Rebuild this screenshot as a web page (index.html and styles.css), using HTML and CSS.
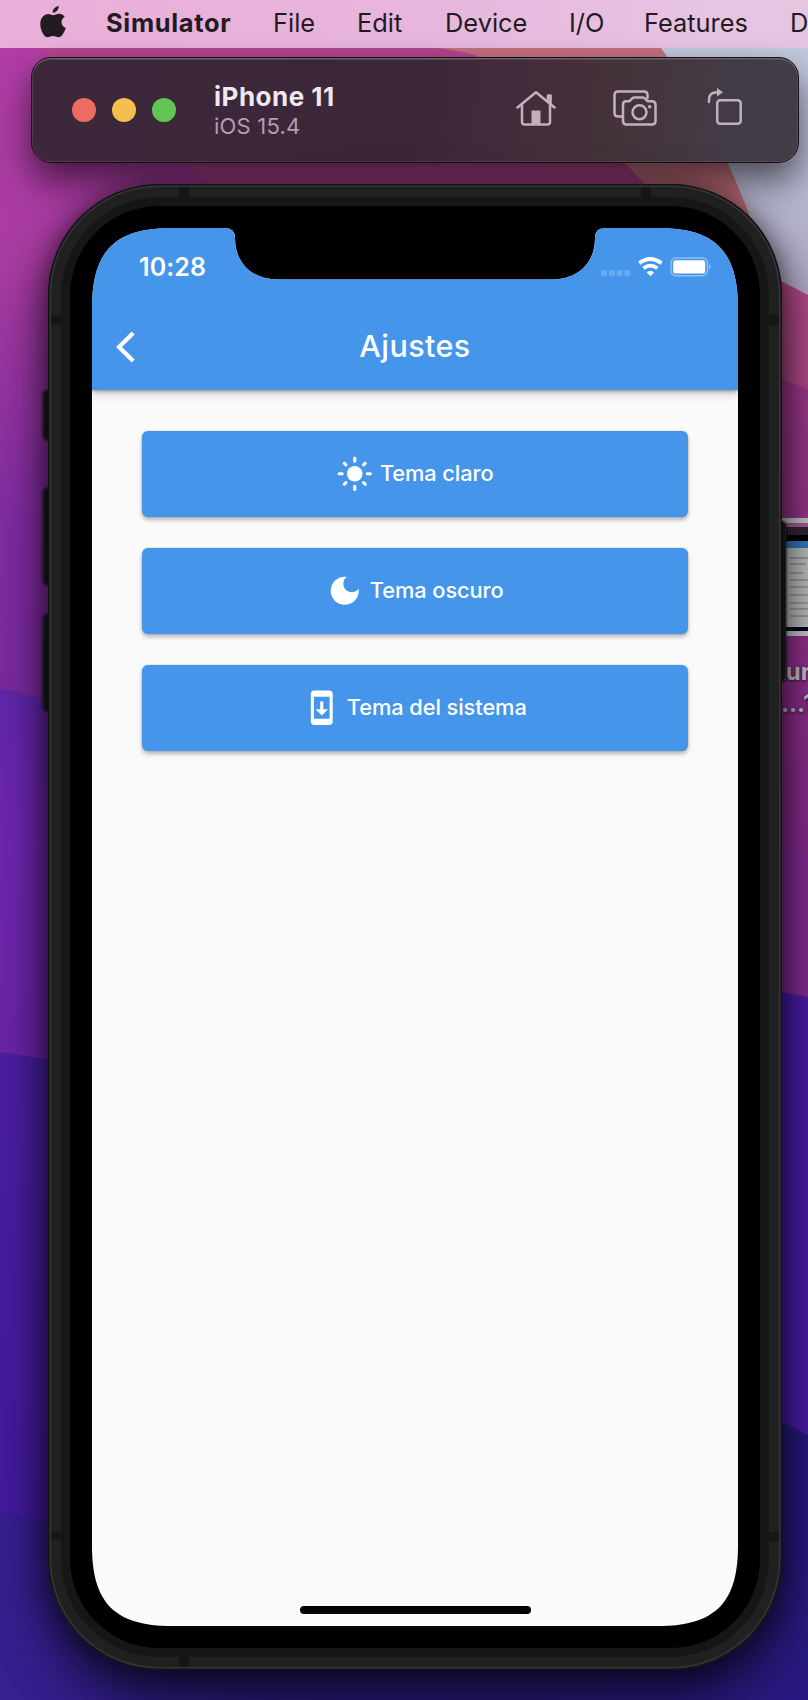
FILE: index.html
```html
<!DOCTYPE html>
<html lang="es">
<head>
<meta charset="utf-8">
<title>Simulator</title>
<link rel="stylesheet" href="styles.css">
</head>
<body>
<div class="desktop">
  <svg class="wallpaper" viewBox="0 0 808 1700" aria-hidden="true">
    <defs>
      <linearGradient id="pink" x1="0" y1="0" x2="0" y2="1">
        <stop offset="0" stop-color="#b33da8"/><stop offset=".35" stop-color="#a93ca2"/><stop offset=".7" stop-color="#822ca4"/><stop offset="1" stop-color="#7a2aa0"/>
      </linearGradient>
      <linearGradient id="violet" x1="0" y1="0" x2="0" y2="1"><stop offset="0" stop-color="#6226ac"/><stop offset=".4" stop-color="#7026b0"/><stop offset="1" stop-color="#6a24a8"/></linearGradient>
      <linearGradient id="indigo" x1="0" y1="0" x2="0" y2="1"><stop offset="0" stop-color="#4a1fa4"/><stop offset="1" stop-color="#421a9c"/></linearGradient>
      <linearGradient id="sky" x1="0" y1="0" x2="0" y2="1"><stop offset="0" stop-color="#c3cadf"/><stop offset="1" stop-color="#b0aac8"/></linearGradient>
      <linearGradient id="right" x1="0" y1="0" x2="0" y2="1"><stop offset="0" stop-color="#a03a8a"/><stop offset="1" stop-color="#86298e"/></linearGradient>
      <linearGradient id="base" x1="0" y1="0" x2="1" y2="0"><stop offset="0" stop-color="#371f90"/><stop offset=".35" stop-color="#281a78"/><stop offset="1" stop-color="#281a80"/></linearGradient>
    </defs>
    <rect width="808" height="740" fill="url(#pink)"/>
    <path d="M38 48 L230 200 H808 V48Z" fill="#b3458f"/>
    <path d="M434 48 Q470 50 500 66 Q580 110 650 190 V250 H808 V48Z" fill="#c4707f"/>
    <path d="M661 48 H808 V300 H755 V230 Q715 120 661 48Z" fill="url(#sky)"/>
    <path d="M740 260 L808 295 V400 H740Z" fill="#b24a8a"/>
    <path d="M740 362 L808 389 V880 H740Z" fill="url(#right)"/>
    <path d="M740 810 L808 860 V1010 H740Z" fill="#832a94"/>
    <path d="M0 688 L110 715 V1080 H0Z" fill="url(#violet)"/>
    <path d="M0 1052 L90 1066 V1540 H0Z" fill="url(#indigo)"/>
    <path d="M740 984 L808 997 V1460 H740Z" fill="#4a1caa"/>
    <path d="M0 1513 L90 1527 L740 1400 L808 1435 V1700 H0Z" fill="url(#base)"/>
    <g>
      <rect x="778" y="518" width="30" height="118" fill="#c9c9c9"/>
      <rect x="786" y="523" width="22" height="4" fill="#a96295"/>
      <rect x="786" y="527" width="22" height="8" fill="#33263a"/>
      <rect x="786" y="535" width="22" height="6" fill="#000"/>
      <rect x="786" y="541" width="22" height="7" fill="#3579bd"/>
      <rect x="786" y="548" width="22" height="78" fill="#bdbfc1"/>
      <path d="M790 558h18M790 564h16M790 573h13M790 580h18M790 587h18M790 595h18M790 603h18M790 609h18M790 616h18" stroke="#8f9092" stroke-width="1.500"/>
      <rect x="786" y="627" width="22" height="4" fill="#07051a"/>
    </g>
  </svg>
  <div class="file-label"><span>tur</span><span class="file-more">...1</span></div>

  <nav class="menubar">
    <svg class="apple" viewBox="0 0 26 32"><path d="M18.700 0c.3 3.500-2.700 6.700-6 6.700C12.300 3.500 15.500.4 18.700 0ZM19 7.700c2.400 0 4.500 1.200 5.700 3-4.700 2.900-4 9.100 1 11.200-1.300 4.400-4.100 9.100-7 9.400-2 .1-3-1.200-5.600-1.200s-3.700 1.200-5.500 1.200C4 31.300.3 24.500.3 18.100.3 11.500 4.400 7.900 8.300 7.900c2 0 3.800 1.300 5 1.300s3.300-1.500 5.700-1.500Z"/></svg>
    <span class="app-name">Simulator</span>
    <span>File</span><span>Edit</span><span>Device</span><span class="io">I/O</span><span>Features</span><span>D</span>
  </nav>

  <header class="window">
    <div class="lights"><i class="red"></i><i class="yellow"></i><i class="green"></i></div>
    <div class="device"><strong>iPhone 11</strong><span>iOS 15.4</span></div>
    <div class="tools">
      <svg width="40" height="36" viewBox="0 0 40 36"><path d="M1.500 17.500 20 2.300l18.500 15.200M6 14.500V32q0 2.500 2.500 2.500h23Q34 34.500 34 32V14.500M32 11.500V5.500h2.600v8"/><path class="fill" d="M15.500 20.500h9v14h-9z"/></svg>
      <svg width="44" height="36" viewBox="0 0 44 36"><path d="M9 26.500H5Q1.500 26.500 1.500 23V5Q1.500 1.500 5 1.500h26q3.500 0 3.500 3.500v3"/><path d="M13 11.200h3.500l3-3q.7-.7 2-.7h8q1.300 0 2 .7l3 3H39q3.500 0 3.500 3.500V31q0 3.500-3.500 3.500H13.500Q10 34.500 10 31V14.700q0-3.500 3-3.500Z"/><circle cx="26.500" cy="22.300" r="7"/><circle class="fill" cx="36.700" cy="16.700" r="1.800"/></svg>
      <svg width="36" height="38" viewBox="0 0 36 38"><rect x="10.200" y="13.200" width="23.500" height="23.500" rx="3"/><path d="M2 15v-2.500Q2 5.500 10 5.300"/><path class="fill" d="M10 1v8.500l6-4.300z"/></svg>
    </div>
  </header>

  <section class="phone">
    <i class="key mute"></i><i class="key up"></i><i class="key down"></i><i class="key power"></i>
    <div class="frame">
      <i class="band t1"></i><i class="band t2"></i><i class="band b1"></i>
      <i class="band l1"></i><i class="band l2"></i><i class="band r1"></i><i class="band r2"></i>
      <div class="ring"><div class="bezel">
        <main class="screen">
          <header class="appbar">
            <div class="status">
              <time>10:28</time>
              <svg width="112" height="20" viewBox="0 0 112 20">
                <g opacity=".2"><rect x="1" y="13.300" width="6" height="6" rx="1.500"/><rect x="8.800" y="13.300" width="6" height="6" rx="1.500"/><rect x="16.600" y="13.300" width="6" height="6" rx="1.500"/><rect x="24.400" y="13.300" width="6" height="6" rx="1.500"/></g>
                <g fill="none" stroke="#fff" stroke-width="3.700"><path d="M39.300 6.200q11-8.400 22.200 0M43.500 11.300q6.900-5.200 13.800 0"/></g>
                <path d="M46.700 15.300q3.700-2.600 7.400 0L50.400 19.200Z"/>
                <rect x="71" y="1" width="36.500" height="17.800" rx="5" fill="none" stroke="#fff" stroke-opacity=".4" stroke-width="1.500"/>
                <rect x="73.200" y="3.200" width="32" height="13.300" rx="2.500"/>
                <path d="M109.200 7q2.800 2.800 0 6z" opacity=".5"/>
              </svg>
            </div>
            <div class="toolbar">
              <svg class="back" width="20" height="32" viewBox="0 0 20 32"><path d="M17.200 2 3 16l14.200 14"/></svg>
              <h1>Ajustes</h1>
            </div>
          </header>
          <div class="options">
            <button class="option claro"><svg viewBox="0 0 24 24"><circle cx="12" cy="12" r="5"/><path class="rays" d="M2 12h2M20 12h2M12 2v2M12 20v2M5.290 5.290l1.060 1.060M17.650 17.650l1.060 1.060M18.710 5.290l-1.060 1.060M6.350 17.650l-1.060 1.060"/></svg><span>Tema claro</span></button>
            <button class="option oscuro"><svg viewBox="0 0 24 24"><path d="M12 3c-4.970 0-9 4.030-9 9s4.030 9 9 9 9-4.030 9-9c0-.46-.04-.92-.1-1.360-.98 1.370-2.580 2.260-4.400 2.260-2.980 0-5.400-2.420-5.400-5.400 0-1.810.89-3.420 2.260-4.400C12.920 3.040 12.460 3 12 3z"/></svg><span>Tema oscuro</span></button>
            <button class="option sistema"><svg viewBox="0 0 24 24"><path d="M17 1.010 7 1c-1.100 0-2 .9-2 2v18c0 1.100.9 2 2 2h10c1.100 0 2-.9 2-2V3c0-1.100-.9-1.990-2-1.990zM17 19H7V5h10v14zm-1-6h-3V8h-2v5H8l4 4 4-4z"/></svg><span>Tema del sistema</span></button>
          </div>
          <i class="home"></i>
        </main>
      </div></div>
    </div>
  </section>
</div>
</body>
</html>
```
FILE: styles.css
```css
* { box-sizing: border-box; }
body { margin: 0; font-family: Inter, "Liberation Sans", sans-serif; }
i { display: block; }
svg { display: block; flex: none; }

.desktop { position: relative; width: 808px; height: 1700px; overflow: hidden; background: #281a80; }
.wallpaper { position: absolute; inset: 0; width: 808px; height: 1700px; }
.file-label {
  position: absolute; left: 777px; top: 656px;
  display: flex; flex-direction: column;
  font-size: 24px; line-height: 32px; font-weight: 700; color: #c9c4c9;
  text-shadow: 0 1px 3px #000a;
}
.file-more { padding-left: 4px; }

.menubar {
  position: relative;
  display: grid; grid-template-columns: 66px 167px 84px 88px 124px 75px 146px 18px;
  align-items: center;
  height: 48px; padding-left: 40px;
  background: linear-gradient(90deg, #eaafd8, #e8b5dc 50%, #e6c5e3 90%);
  color: #231b22; font-size: 25.400px; line-height: 46px; white-space: nowrap;
}
.menubar span { height: 46px; align-self: start; }
.apple { width: 26px; height: 32px; fill: #231b22; margin-top: -4px; }
.menubar .app-name { font-weight: 700; letter-spacing: .7px; }

.window {
  position: relative;
  display: flex; align-items: center;
  width: 768px; height: 106px; margin: 9px 0 0 31px; padding: 0 55px 0 40px;
  border: 1px solid #160d16; border-radius: 20px;
  background: linear-gradient(98deg, #3d283b, #3c2739 50%, #45333b 76%, #413c46 92%);
  box-shadow: inset 0 1.500px 0 #6c6069, inset 0 0 0 1px #ffffff18, 0 18px 36px #0009;
}
.lights { display: flex; gap: 16px; }
.lights i { width: 24px; height: 24px; border-radius: 50%; }
.red { background: #ed6b60; }
.yellow { background: #f5bf50; }
.green { background: #62c655; }
.device { display: flex; flex-direction: column; margin: 2px 0 0 38px; white-space: nowrap; }
.device strong { font-size: 26px; line-height: 30px; font-weight: 700; letter-spacing: .5px; color: #efe8ee; }
.device span { font-size: 22px; line-height: 29px; letter-spacing: .2px; color: #b69cb3; }
.tools { display: flex; align-items: center; margin: -4px 0 0 auto; }
.tools svg { fill: none; stroke: #c4b0bd; stroke-width: 2.500; stroke-linejoin: round; stroke-linecap: round; }
.tools svg + svg { margin-left: 57px; }
.tools svg:last-child { margin-left: 50px; margin-top: -5px; }
.tools .fill { fill: #c4b0bd; stroke: none; }

.phone { position: relative; width: 734px; height: 1486px; margin: 21px 0 0 48px; }
.frame {
  position: relative; height: 100%; padding: 13px; border-radius: 111px;
  background: #202020;
  box-shadow: inset 0 0 0 1.500px #141214, inset 0 0 0 3px #363636, 0 22px 50px 4px #000000a8, 0 0 22px #0006;
}
.ring { position: relative; height: 100%; padding: 9px; border-radius: 98px; background: #161616; }
.bezel { height: 100%; padding: 22px; border-radius: 89px; background: #000; }
.screen {
  position: relative; width: 646px; height: 1398px; background: #fafafa;
  clip-path: path("M0 80C0 23 23 0 80 0H133Q143 0 143 10C143 36 161 51.500 186 51.500H460C485 51.500 503 36 503 10Q503 0 513 0H566C623 0 646 23 646 80V1318C646 1375 623 1398 566 1398H80C23 1398 0 1375 0 1318Z");
}
.band { position: absolute; background: #161616; }
.t1, .b1 { left: 131px; width: 10px; height: 10px; }
.t2 { left: 593px; width: 10px; height: 10px; }
.t1, .t2 { top: 3px; }
.b1 { bottom: 3px; }
.l1, .l2 { left: 3px; width: 10px; }
.r1, .r2 { right: 3px; width: 10px; }
.l1, .r1 { top: 131px; height: 10px; }
.l2 { top: 1348px; height: 7px; }
.r2 { top: 1348px; height: 10px; }
.key { position: absolute; left: -5px; width: 12px; border: 1.500px solid #3b393b; border-radius: 5px; background: #1b1b1b; box-shadow: 0 0 2px 1px #0008; }
.mute { top: 206px; height: 50px; }
.up { top: 304px; height: 97px; }
.down { top: 430px; height: 97px; }
.power { left: 727px; top: 337px; width: 11px; height: 160px; }

.appbar {
  position: relative; height: 162px; background: #4595eb; color: #fff;
  box-shadow: 0 1px 3px #0005, 0 4px 9px #0003;
}
.status { display: flex; justify-content: space-between; align-items: center; height: 75px; padding: 3px 26px 0 47px; }
.status time { font-size: 25px; line-height: 30px; font-weight: 600; letter-spacing: .1px; }
.status svg { fill: #fff; margin-bottom: 1px; }
.toolbar { display: grid; grid-template-columns: 60px 1fr 60px; align-items: center; height: 87px; }
.back { margin-left: 24px; fill: none; stroke: #fff; stroke-width: 4.200; }
h1 { margin: 0 0 2px; text-align: center; font-size: 30.500px; line-height: 38px; font-weight: 500; letter-spacing: .4px; }

.options { display: grid; gap: 31px; padding: 41px 50px 0; }
.option {
  display: flex; justify-content: center; align-items: center; gap: 6px;
  height: 86px; padding: 0; border: 0; border-radius: 6px;
  background: #4595eb; color: #fff; white-space: nowrap;
  font: 500 21.800px/30px Inter, "Liberation Sans", sans-serif;
  letter-spacing: -.08px;
  box-shadow: 0 0 2px #0003, 0 3px 4px #0004;
}
.option span { margin-bottom: 2px; }
.option svg { width: 37.500px; height: 37.500px; fill: #fff; }
.rays { fill: none; stroke: #fff; stroke-width: 2; stroke-linecap: round; }
.home { position: absolute; left: 207.500px; bottom: 12.500px; width: 231px; height: 8px; border-radius: 4px; background: #000; }
```
